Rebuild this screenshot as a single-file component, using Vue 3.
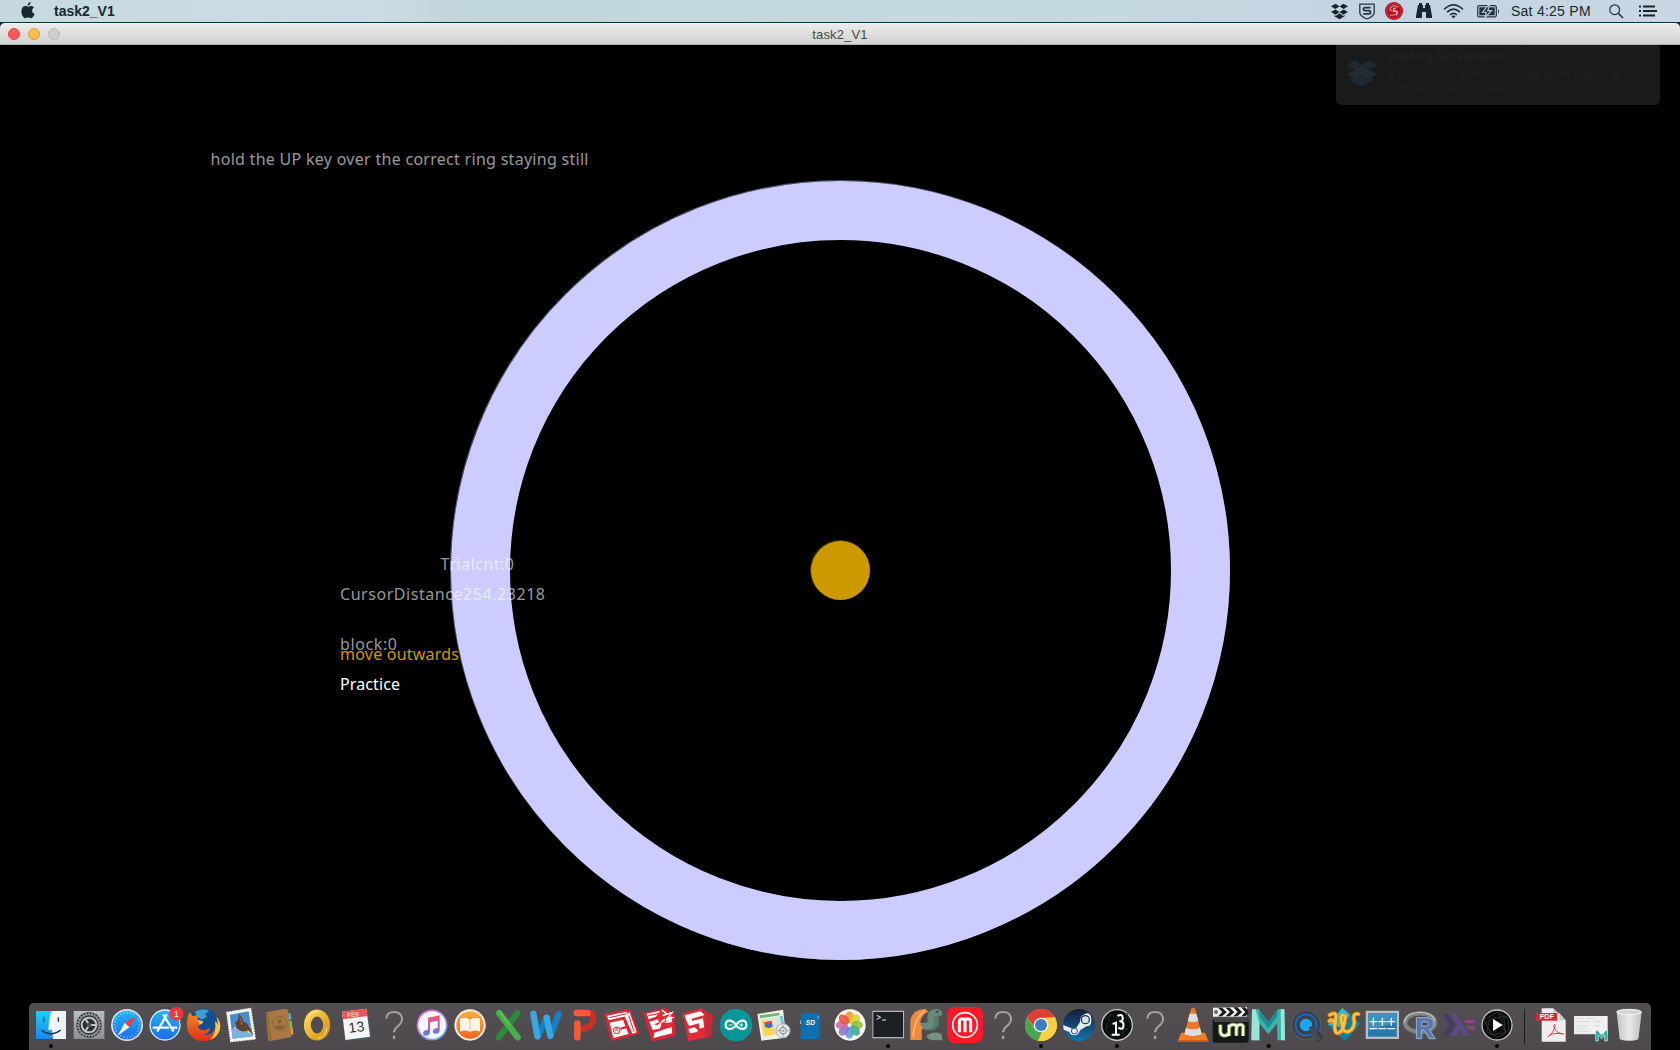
<script setup>
const messages = [
  { text: 'hold the UP key over the correct ring staying still', x: 210.5, y: 165, w: 378, kind: 'dim' },
  { text: 'Trialcnt:0', x: 440.5, y: 570, w: 73.5, kind: 'dim' },
  { text: 'CursorDistance254.23218', x: 340, y: 600, w: 205, kind: 'dim' },
  { text: 'block:0', x: 340, y: 650, w: 57, kind: 'dim' },
  { text: 'move outwards', x: 340, y: 660, w: 119, kind: 'gold' },
  { text: 'Practice', x: 340, y: 690, w: 60, kind: 'bright' },
]
const petals = ['#f59a1f', '#d9d02a', '#8fc13c', '#3cae86', '#5a9edc', '#8b76c4', '#cb6ba5', '#ec5340']
const teeth = Array.from({ length: 24 }, (_, i) => i * 15)
const box = '-57 -66 114 141'
</script>

<template>
  <div class="screen">
    <header class="menubar">
      <svg class="apple" viewBox="0 0 14 17"><path d="M9.7 0C9.8 1.9 8.4 3.6 6.6 3.8 6.4 2 8 .2 9.7 0ZM7 4.7C7.8 4.7 8.7 3.9 10.1 3.9 11.4 3.9 12.5 4.6 13.1 5.6 10.2 7.3 10.7 11 13.6 12.1 12.8 14.2 11.5 16.2 10.1 16.2 9 16.2 8.5 15.5 7.2 15.5 5.9 15.5 5.4 16.2 4.3 16.2 2.3 16.2.4 12.6.4 9.3.4 5.9 2.3 4 4.4 4 5.6 4 6.4 4.7 7 4.7Z" fill="#17282e"/></svg>
      <b class="app">task2_V1</b>
      <div class="status">
        <svg class="s-drop" viewBox="0 0 17 17"><path d="M4.7.7 8.5 3.4 4.4 6 0 3.3ZM12.3.7 17 3.3 12.7 6 8.5 3.4ZM4.4 6.4 8.5 9 4.7 11.8 0 9ZM12.7 6.4 17 9 12.3 11.8 8.5 9ZM8.5 10.3 12.2 12.9 13.6 12.1V13.3L8.5 16.3 3.4 13.3V12.1L4.8 12.9Z" fill="#17262c"/></svg>
        <svg class="s-shield" viewBox="0 0 16 17"><path d="M.8 1.2H15.2V9.5C15.2 13 11 14.8 8 16 5 14.8.8 13 .8 9.5Z" fill="none" stroke="#26363e" stroke-width="1.3"/><path d="M11.7 4.6H6Q4.4 4.6 4.4 6T6 7.6H9.8Q11.5 7.6 11.5 9.2T9.8 10.800H4.2" fill="none" stroke="#26363e" stroke-width="1.8"/></svg>
        <svg class="s-red" viewBox="0 0 18 18"><circle cx="9" cy="9" r="9" fill="#b30d20"/><circle cx="9" cy="9" r="7.3" fill="none" stroke="#d4505d" stroke-width=".7"/><path d="M13 5.300Q9 2.300 6 5.300T8 9 12 11.500 5 13M11 6.500Q8.500 5.500 8.500 7T11.500 9 11 13.500" fill="none" stroke="#e9a3a9" stroke-width="1.100"/></svg>
        <svg class="s-bino" viewBox="0 0 16 16"><path d="M3 0H6V2H7V5H9V2H10V0H13V2H14L16 13V15H10V9H6V15H0V13L2 2H3Z" fill="#17262c"/></svg>
        <svg class="s-wifi" viewBox="0 0 20 15"><g fill="none" stroke="#22323a" stroke-width="1.700"><path d="M.6 5.300Q10-3.500 19.400 5.300M3.600 8.200Q10 2 16.400 8.200M6.600 11Q10 7.700 13.400 11"/></g><path d="M7.900 12.300Q10 10.700 12.100 12.300L10 14.600Z" fill="#22323a"/></svg>
        <svg class="s-batt" viewBox="0 0 23 13"><rect x=".7" y=".7" width="18.600" height="11.200" rx="1.500" fill="none" stroke="#22323a" stroke-width="1.200"/><rect x="2.300" y="2.300" width="15.400" height="8" fill="#22323a"/><path d="M11.500 0 5.500 7.200H9.200L8 12.500 14.600 5.600H10.800L12.500 0Z" fill="#22323a" stroke="#c3d3df" stroke-width="1.100"/><path d="M21 4Q23 6.300 21 8.600Z" fill="#22323a"/></svg>
        <span class="clock">Sat 4:25 PM</span>
        <svg class="s-find" viewBox="0 0 15 15"><circle cx="5.700" cy="5.700" r="4.900" fill="none" stroke="#22323a" stroke-width="1.200"/><path d="M9.300 9.300 14 14" stroke="#22323a" stroke-width="1.600"/></svg>
        <svg class="s-list" viewBox="0 0 18 12"><path d="M0 1.500H2M0 6H2M0 10.500H2M4 1.500H16M4 6H18M4 10.500H16" stroke="#17262c" stroke-width="1.900"/></svg>
      </div>
    </header>

    <div class="titlebar-back">
      <div class="titlebar">
        <div class="lights"><i class="close"/><i class="mini"/><i class="zoom"/></div>
        <span class="title">task2_V1</span>
      </div>
    </div>

    <main class="stage">
      <svg class="canvas" viewBox="0 45 1680 958">
        <circle cx="840" cy="570" r="389.500" fill="none" stroke="#ccccff" stroke-opacity=".4"/>
        <circle cx="840.500" cy="570.500" r="360" fill="none" stroke="#ccccff" stroke-width="59"/>
        <circle cx="840" cy="570" r="29.500" fill="none" stroke="#cc9900" stroke-opacity=".4"/>
        <circle cx="840.500" cy="570.500" r="29.500" fill="#cc9900"/>
        <text v-for="m in messages" :key="m.text" :x="m.x" :y="m.y" :textLength="m.w" :class="m.kind">{{ m.text }}</text>
      </svg>
      <aside class="toast">
        <svg class="toast-icon" viewBox="0 0 30 27"><path d="M8 0 15 5 8 10 0 5Z" fill="#1e2a33"/><path d="M22 0 30 5 22 10 15 5Z" fill="#1e2a33"/><path d="M0 14 8 10 15 15 8 19ZM30 14 22 10 15 15 22 19Z" fill="#202c36"/><path d="M8 10 15 5 22 10 15 15Z" fill="#262c31"/><path d="M5 18 8 19 15 15 22 19 25 18V21L15 27 5 21Z" fill="#1d2830"/></svg>
        <div class="toast-body"><b>Sharing Screenshot</b><span>A link to your screenshot has been copied to your<br>clipboard (click to view).</span></div>
      </aside>
    </main>

    <footer class="dock">
      <svg class="icon" :viewBox="box">
        <defs>
          <linearGradient id="cyan" x2="0" y2="1"><stop stop-color="#18d1fb"/><stop offset="1" stop-color="#1b87ee"/></linearGradient>
          <linearGradient id="blue" x2="0" y2="1"><stop stop-color="#1fb6f8"/><stop offset="1" stop-color="#1c6bea"/></linearGradient>
          <linearGradient id="steel" x2="0" y2="1"><stop stop-color="#b5bfc5"/><stop offset="1" stop-color="#899094"/></linearGradient>
          <linearGradient id="gold" x2="1" y2="1"><stop stop-color="#fbd65c"/><stop offset="1" stop-color="#d99413"/></linearGradient>
          <linearGradient id="fox" x2="0" y2="1"><stop stop-color="#f08a22"/><stop offset="1" stop-color="#d8321b"/></linearGradient>
          <linearGradient id="orange" x2="0" y2="1"><stop stop-color="#fcab3c"/><stop offset="1" stop-color="#f0661f"/></linearGradient>
          <linearGradient id="note" x2="0" y2="1"><stop stop-color="#f8536b"/><stop offset=".6" stop-color="#b35bd0"/><stop offset="1" stop-color="#3a90f3"/></linearGradient>
          <linearGradient id="rim" x2="1" y2="1"><stop stop-color="#f56ab0"/><stop offset=".45" stop-color="#b172ed"/><stop offset="1" stop-color="#42c8f5"/></linearGradient>
          <linearGradient id="steam" x2="0" y2="1"><stop stop-color="#141b36"/><stop offset="1" stop-color="#1474ae"/></linearGradient>
          <linearGradient id="trash" x2="1" y2="0"><stop stop-color="#c9c9cb"/><stop offset=".5" stop-color="#f1f1f2"/><stop offset="1" stop-color="#c2c2c5"/></linearGradient>
          <radialGradient id="qt"><stop stop-color="#35d1ff"/><stop offset="1" stop-color="#0b68dc"/></radialGradient>
        </defs>
        <path d="M-45-42H45V42H-45Z" fill="url(#cyan)"/><path d="M1-42H45V42H6Q3 26 3 14H-8Q-7-18 1-42Z" fill="#edf3f8"/><path d="M-22-21V-11M22-21V-11M-28 16Q0 38 28 16" fill="none" stroke="#20313e" stroke-width="4" stroke-linecap="round"/><circle cy="63" r="6" fill="#050505"/>
      </svg>
      <svg class="icon" :viewBox="box"><path d="M-46-42H46V42H-46Z" fill="url(#steel)"/><circle r="38" fill="#2e3032"/><circle r="31" fill="none" stroke="#85898c" stroke-width="4"/><path v-for="t in teeth" :key="t" d="M0-37V-31" :transform="`rotate(${t})`" stroke="#a5a8aa" stroke-width="4"/><circle r="22" fill="none" stroke="#c1c4c6" stroke-width="6"/><path d="M0 0H25M0 0-12-21M0 0-12 21" stroke="#c1c4c6" stroke-width="6"/><circle r="7" fill="#505356"/></svg>
      <svg class="icon" :viewBox="box"><circle r="48" fill="#dfe4e7"/><circle r="43" fill="url(#blue)"/><path v-for="t in teeth" :key="t" d="M0-40V-34" :transform="`rotate(${t})`" stroke="#c1e3fa" stroke-width="2"/><path d="M28-27 7 7-7-7Z" fill="#f33b37"/><path d="M-28 32-7-7 7 7Z" fill="#f2f2f2"/></svg>
      <svg class="icon" :viewBox="box"><circle r="47" fill="#dcebf5"/><circle r="43" fill="url(#blue)"/><g stroke="#f2f8fe" stroke-width="7" stroke-linecap="round" fill="none"><path d="M4-29-22 17M-4-29 24 17M-34 8H9M24 8H34"/></g><circle cx="34" cy="-34" r="21" fill="#f0373c"/><text x="34" y="-25" class="badge">1</text></svg>
      <svg class="icon" :viewBox="box"><circle cx="2" cy="-3" r="47" fill="#12508f"/><path d="M-25-40Q-2-54 20-42L6-33 12-24-4-16-16-24Z" fill="#3f9ccb"/><path d="M-40-39-32-27-12-31Q-18-22-15-15L0-11-1-5-15 3Q-14 13 0 16 15 15 22 7 20 24 3 30 26 32 35 14 40 2 36-11 43-6 44 0 46-12 40-25 56-8 50 15 42 44 8 49-30 51-45 20-54-10-40-39Z" fill="url(#fox)"/><path d="M40-25Q56-8 50 15 43 36 22 44 42 22 36-11 43-6 44 0 46-12 40-25Z" fill="#fac640"/><path d="M-15-15 0-11-1-5-10-1Z" fill="#f5b873"/></svg>
      <svg class="icon" :viewBox="box"><path d="M-43-38 29-50 43 42-31 50Z" fill="#f6f6f4" stroke="#efefee" stroke-width="4" stroke-dasharray="5 3"/><path d="M-34-31 23-41 35 34-25 41Z" fill="#4b8dcc"/><path d="M-29 12 31 2 35 34-25 41Z" fill="#7ab1dd"/><path d="M-20-8Q-9-8-9-22L-7-33Q4-26 7-10L17-6 29 12 36 29 20 18 10 19Q-2 21-9 12L-24 9-12 3Z" fill="#5e432a"/><path d="M-24 9-16 5-13 13ZM18 13 33 27 23 24Z" fill="#e5e0ca"/><path d="M-5-25Q2-14 2 0" fill="none" stroke="#9a7950" stroke-width="3"/></svg>
      <svg class="icon" :viewBox="box"><path d="M26-34 35-36 37-17 29-14Z" fill="#41b3e1"/><path d="M29-11 38-13 40 7 32 9Z" fill="#75c44d"/><path d="M33 9 41 7 43 28 35 31Z" fill="#ee933d"/><path d="M-40-38 20-49Q26-49 27-43L37 36-28 49Q-32 49-33 43Z" fill="#a87943"/><path d="M-40-38-33-39-22 47-28 49Z" fill="#936a38"/><circle cx="2" cy="-5" r="21" fill="none" stroke="#8c6234" stroke-width="3"/><circle cx="2" cy="-11" r="7" fill="#8c6234"/><path d="M-13 7Q-9-1 2-1T17 7Q2 20-13 7Z" fill="#8c6234"/></svg>
      <svg class="icon" :viewBox="box"><ellipse cx="0" cy="0" rx="29" ry="36" fill="none" stroke="url(#gold)" stroke-width="21"/><path d="M-30-14Q-21-43 5-40M30 8Q27 36 3 40" fill="none" stroke="#ffe58c" stroke-width="3"/></svg>
      <svg class="icon" :viewBox="box"><path d="M-37-34 37-44 48 40-28 51Z" fill="#4a565a"/><path d="M-42-40 31-49 42 35-32 45Z" fill="#f5f5f5"/><path d="M-42-40 31-49 34-27-39-17Z" fill="#ed5351"/><text class="month" x="-5" y="-26" transform="rotate(-7)">FEB</text><text class="day" x="0" y="21" transform="rotate(-7)">13</text></svg>
      <svg class="icon" :viewBox="box"><path d="M-23-19Q-22-39 0-39T24-19Q24-7 12 3 0 12 0 22" fill="none" stroke="#a4a1a4" stroke-width="6"/><path d="M0 32V42" stroke="#a4a1a4" stroke-width="7"/></svg>
      <svg class="icon" :viewBox="box"><circle r="44" fill="#f9f7fb" stroke="url(#rim)" stroke-width="5"/><path d="M-12-22 23-29V14Q23 26 12 26T3 19Q3 10 17 9V-13L-6-8V21Q-7 31-17 32T-27 24Q-26 15-12 14Z" fill="url(#note)"/></svg>
      <svg class="icon" :viewBox="box"><circle r="47" fill="#f5eee8"/><circle r="41" fill="url(#orange)"/><path d="M0-16Q-15-27-30-18V20Q-14 13 0 21 14 13 30 20V-18Q15-27 0-16Z" fill="#fff5e8"/><path d="M0-16V21" stroke="#d7a579" stroke-width="2"/></svg>
      <svg class="icon" :viewBox="box"><g stroke-width="19" stroke-linecap="round"><path d="M28-35-28 37" stroke="#2d8a39"/><path d="M-27-36 29 37" stroke="#48ae4d"/><path d="M-24-39 5 0" stroke="#61c55d" stroke-width="5"/></g></svg>
      <svg class="icon" :viewBox="box"><g fill="none" stroke-width="19" stroke-linecap="round" stroke-linejoin="round"><path d="M2-22-24 34M38-33 13 33" stroke="#1a7dbd"/><path d="M-38-34-26 34M2-22 13 33" stroke="#38a8e3"/></g></svg>
      <svg class="icon" :viewBox="box"><path d="M-20-36H13Q28-36 28-19T12 5L-1 12" fill="none" stroke="#cd3022" stroke-width="19" stroke-linecap="round"/><path d="M-20-4V37M-22-36H10" stroke="#f6583a" stroke-width="20" stroke-linecap="round"/></svg>
      <svg class="icon" :viewBox="box"><path d="M-54-33 23-49 53 26-32 48Z" fill="#df2432" stroke="#8e4447" stroke-width="2"/><path d="M-45-28 14-40 19-28-40-14ZM22-39 44 22 31 26 9-24ZM-37-7 4-16 22 26-26 39Z" fill="#fff"/><path d="M-38-22 14-34M20-29 36 20" stroke="#d52332" stroke-width="3"/><path d="M3-16 9-17 25 24 19 26 13 10-4 14-6 8 10 4Z" fill="#df2432"/><circle cx="-16" cy="16" r="10" fill="#fff" stroke="#d12632" stroke-width="3"/><path d="M-21 20-16 8-11 20M-19 15H-13" fill="none" stroke="#d12632" stroke-width="2"/></svg>
      <svg class="icon" :viewBox="box"><path d="M-50-37 15-51 44-34 46 32-24 50Z" fill="#dd2635"/><path d="M-40-34 1-43-12-25-34-17ZM-32-10-5-17-3-8-18-2-8 1 11-18 35-26 36-8 7-5-1 11-22 15ZM-17 23 35 5 36 25-20 39Z" fill="#fff"/><path d="M-35-28 7-37 9-29-4-24-3-15 16-21 17-10 5-5 6 5 27-2 29 10" fill="none" stroke="#e33340" stroke-width="4"/><path d="M5-45 20-34 8-28 36-37 20-18 42-23" fill="none" stroke="#fff" stroke-width="4"/></svg>
      <svg class="icon" :viewBox="box"><path d="M-47-35 10-50 45-28 37 35-30 48Z" fill="#e02c3a"/><path d="M10-50 45-28 37 35 20 38 23-19Z" fill="#c92836"/><path d="M-40-29 7-41 20-30-19-19-18-12 15-20 18 7 5 11 2-5-26 3-32-6Z" fill="#fff"/><path d="M-29 12-11 7-1 14-2 21-24 25Z" fill="#fff"/></svg>
      <svg class="icon" :viewBox="box"><circle r="49" fill="#07979b"/><path d="M0 0C-9-15-30-19-31-1S-9 15 0 0 30-19 31-1 9 15 0 0Z" fill="none" stroke="#eef7f5" stroke-width="7"/><path d="M-22 0H-10M10 0H22M16-6V6" stroke="#eef7f5" stroke-width="3"/></svg>
      <svg class="icon" :viewBox="box"><path d="M-50-33 27-46 37 38-38 47Z" fill="#f4f0e3"/><path d="M-43-29 16-37 17-29-42-20Z" fill="#6ab67d"/><path d="M-40-17 17-26 28 22-31 37Z" fill="#dce6d2"/><path d="M-38-12-25-14 12 26-31 34Z" fill="#fad656"/><path d="M-29-8-7-12-4 5-16 10-27 6Z" fill="#486ebc"/><path d="M-29-8-7-12-6-7-28-3Z" fill="#df4a45"/><path d="M17-26 26-27 31 2 24 5Z" fill="#6ac5e9"/><circle cx="27" cy="17" r="21" fill="#e6ebed" stroke="#a5b0b5" stroke-width="3"/><circle cx="27" cy="17" r="10" fill="none" stroke="#4a5559" stroke-width="2"/><path d="M27 0V8M27 26V34M10 17H18M36 17H44M23 13 31 21M31 13 23 21" stroke="#607078" stroke-width="2"/></svg>
      <svg class="icon" :viewBox="box"><path d="M-32-35H16L23-28V42H-34V-8H-31V-14H-35Z" fill="#0d70b1"/><path d="M-34-14V-3M18-28V-20" stroke="#e5f1f7" stroke-width="2"/><text x="-5" y="1" class="sd">SD</text></svg>
      <svg class="icon" :viewBox="box"><circle r="47" fill="#f7f5f2"/><ellipse v-for="(p, i) in petals" :key="p" cx="0" cy="-23" rx="13" ry="18" :fill="p" opacity=".88" :transform="`translate(-2) rotate(${i * 45})`"/></svg>
      <svg class="icon" :viewBox="box"><path d="M-47-43H48V40H-47Z" fill="#adb5bb"/><path d="M-44-39H45V36H-44Z" fill="#1d2022"/><path d="M-34-29-22-23-34-17M-18-15H-6" fill="none" stroke="#eee" stroke-width="3"/><circle cy="63" r="6" fill="#050505"/></svg>
      <svg class="icon" :viewBox="box"><path d="M-47 45V-10Q-45-46-2-49L7-40Q-13-32-18-8L-4-4V8L-13 14V45Z" fill="#f18b3c"/><path d="M-39 35Q-34-24-4-43" fill="none" stroke="#ffbc76" stroke-width="5"/><path d="M-3 5Q33 10 28-14 22-36 39-33" fill="none" stroke="#56776a" stroke-width="22"/><path d="M-18-6Q4-2 5-14-2-48 32-48 52-47 48-29L31-24Q20-29 25-10 27 17-9 12Z" fill="#698a7b"/><path d="M2 32Q22 16 46 27L49 46H29Q2 45 2 32Z" fill="#779285"/><circle cx="34" cy="-40" r="3" fill="#192b26"/></svg>
      <svg class="icon" :viewBox="box"><rect x="-54" y="-54" width="108" height="108" rx="23" fill="#ff1825"/><circle r="37" fill="none" stroke="#fff" stroke-width="5"/><path d="M-17 22V-10Q-17-18-10-18H10Q17-18 17-10V22M0-18V22" fill="none" stroke="#fff" stroke-width="9"/></svg>
      <svg class="icon" :viewBox="box"><path d="M-23-19Q-22-39 0-39T24-19Q24-7 12 3 0 12 0 22" fill="none" stroke="#a4a1a4" stroke-width="6"/><path d="M0 32V42" stroke="#a4a1a4" stroke-width="7"/></svg>
      <svg class="icon" :viewBox="box"><circle r="48" fill="#f9cf45"/><path d="M-42-24A48 48 0 0 1 42-24L0-21-19 9Z" fill="#df3f35"/><path d="M-42-24-19 11 2 22-9 47A48 48 0 0 1-42-24Z" fill="#45a654"/><path d="M48 0A48 48 0 0 1-9 47L19 10 0-21H43Z" fill="#f9cf45"/><circle r="22" fill="#edf2f4"/><circle r="18" fill="#397fc1"/><circle cy="63" r="6" fill="#050505"/></svg>
      <svg class="icon" :viewBox="box"><circle r="48" fill="url(#steam)"/><path d="M-48 0-19 11-8 8 3-9Q2-29 19-34T37-17 22 4L3 16Q-1 31-14 31-27 31-29 21L-46 14Z" fill="#e8edf0"/><circle cx="19" cy="-16" r="14" fill="#253b5c"/><circle cx="19" cy="-16" r="10" fill="#dbe3e8"/><circle cx="-14" cy="18" r="9" fill="none" stroke="#29537c" stroke-width="3"/></svg>
      <svg class="icon" :viewBox="box"><circle r="46" fill="#070c0d" stroke="#c9c9c9" stroke-width="4"/><path d="M-39-16-18-33 3-17 30-36 40 1 17 25-16 37-35 9-14-5 34 15M-18-33-35 9M30-36 17 25" fill="none" stroke="#2e3930" stroke-width="2"/><path d="M-13-3-3-7V28M-16 29H8M-3-6V28" fill="none" stroke="#fff" stroke-width="6"/><path d="M1-27Q15-35 17-23T7-11Q21-11 19 3T4 8" fill="none" stroke="#fff" stroke-width="6"/><circle cy="63" r="6" fill="#050505"/></svg>
      <svg class="icon" :viewBox="box"><path d="M-23-19Q-22-39 0-39T24-19Q24-7 12 3 0 12 0 22" fill="none" stroke="#a4a1a4" stroke-width="6"/><path d="M0 32V42" stroke="#a4a1a4" stroke-width="7"/></svg>
      <svg class="icon" :viewBox="box"><path d="M-36 23H36L47 50H-46Z" fill="#f17b26"/><path d="M-5-50Q0-54 6-50L27 31Q0 45-27 31Z" fill="#ee7625"/><path d="M-10-34H10L16-12Q0-5-16-12ZM-21 8Q0 17 21 8L26 28Q0 39-26 28Z" fill="#dedede"/><path d="M-46 48H47" stroke="#cb5314" stroke-width="5"/></svg>
      <svg class="icon" :viewBox="box"><rect x="-55" y="-18" width="108" height="71" rx="9" fill="#151719"/><path d="M-51-22H52V-9H-51Z" fill="#444"/><path d="M-54-52 48-54V-25H-54Z" fill="#eee"/><path d="M-39-52H-27L-13-38-27-26H-39L-26-39ZM-16-52H-4L10-38-4-26H-16L-3-39ZM7-53H19L33-39 19-26H7L20-39ZM30-53H42L52-42V-33L43-26H31L43-39Z" fill="#181a1b"/><circle cx="-45" cy="-39" r="6" fill="#666"/><g fill="none" stroke-linejoin="round"><path d="M-32-1V20Q-31 32-19 32T-6 20V-1M-6 33V10Q-5-1 7-1T16 9V32M16 10Q17-1 28-1T36 10V33" stroke="#5f8a34" stroke-width="13"/><path d="M-32-1V20Q-31 32-19 32T-6 20V-1M-6 33V10Q-5-1 7-1T16 9V32M16 10Q17-1 28-1T36 10V33" stroke="#fbffe9" stroke-width="7"/></g></svg>
      <svg class="icon" :viewBox="box"><g transform="translate(-2)"><path d="M-49-47H-28L0-9 29-47H48L50 46H27L26-5 0 28-27-5V46H-51Z" fill="#39b5ad"/><path d="M-49-47H-38L-27-5V46H-51ZM37-47H48L50 46H38Z" fill="#9be4d9"/><path d="M-28-47 0-9 29-47 26-25 0 10-26-25Z" fill="#1f8d93"/></g><circle cx="-1" cy="63" r="6" fill="#050505"/></svg>
      <svg class="icon" :viewBox="box"><g transform="translate(-3)"><circle r="46" fill="#555d65"/><path d="M10 12 31 8 47 31V47H31Z" fill="#343b42"/><circle r="38" fill="none" stroke="#3b434b" stroke-width="9"/><circle r="33" fill="url(#qt)"/><circle r="24" fill="none" stroke="#3a4249" stroke-width="11"/><circle r="18" fill="#19a7f5"/><path d="M7 6 18 3 46 45H27Z" fill="#434b52"/></g></svg>
      <svg class="icon" :viewBox="box"><g transform="translate(-3)"><path d="M-5-51 49-4 3 49-49-1Z" fill="#087fa6"/><path d="M-5-51 18-31-8 7-49-1Z" fill="#36bad3"/><path id="coil" d="M-43-30Q-24-41-24-25L-28 8Q-27 30-13 22T4-27Q-12-35-9-18L-4 12Q7 28 21 15T29-20Q28-36 43-33M-44-12Q-33-20-31-8" fill="none" stroke="#d48517" stroke-width="13" stroke-linecap="round"/><path d="M-43-30Q-24-41-24-25L-28 8Q-27 30-13 22T4-27Q-12-35-9-18L-4 12Q7 28 21 15T29-20Q28-36 43-33M-44-12Q-33-20-31-8" fill="none" stroke="#ffc044" stroke-width="8" stroke-linecap="round"/></g></svg>
      <svg class="icon" :viewBox="box"><path d="M-52-43H48V42H-52Z" fill="#b7bfc4"/><path d="M-45-36H41V35H-45Z" fill="#2679ab"/><path d="M-45-36H41V-9L-45 18Z" fill="#4090bd"/><path d="M-40-10H-17M-29-22V2M-14-10H10M-2-22V2M13-10H36M25-22V2M-40 11H-17M-14 11H10M13 11H36" stroke="#eff5f7" stroke-width="4"/></svg>
      <svg class="icon" :viewBox="box"><ellipse cx="-3" cy="-7" rx="45" ry="28" fill="none" stroke="#7e8681" stroke-width="13"/><path d="M-51-6Q-45-38-5-38T42-12" fill="none" stroke="#bbc0bc" stroke-width="4"/><path fill-rule="evenodd" d="M-14-22H17Q38-22 38-4 38 8 25 13L43 41H24L9 15H2V41H-14ZM2-9V3H15Q22 3 22-3T15-9Z" fill="#597aaa" stroke="#9bb2d3" stroke-width="3"/></svg>
      <svg class="icon" :viewBox="box"><path d="M-50-33H-34L-12 0-34 34H-50L-28 0Z" fill="#453b65"/><path d="M-27-33H-11L33 34H17L3 13-11 34H-27L-5 0Z" fill="#5e4a88"/><path d="M13-15H48V-5H20ZM23 3H48V13H29Z" fill="#884783"/></svg>
      <svg class="icon" :viewBox="box"><circle r="45" fill="#090a0a" stroke="#c5c5c5" stroke-width="4"/><path d="M-39-17 5-39 33-20 36 15 4 38-31 20-22-17 20-26 25 23-17 29M-39-17-17 29M5-39 25 23M-42 2-22-17M33-20 20-26" fill="none" stroke="#3f4141" stroke-width="2"/><path d="M-12-18 17 0-12 18Z" fill="#fff"/><circle cy="63" r="6" fill="#050505"/></svg>
      <i class="divider"/>
      <svg class="icon" :viewBox="box"><g transform="translate(-1)"><path d="M-30-50H4L20-35H23L42-14V50H-30Z" fill="#eee"/><path d="M4-50V-35H20ZM23-35V-14H42Z" fill="#c8c8c8"/><path d="M-47-36H17V-13H-47Z" fill="#e3262c"/><text x="-15" y="-17" class="pdf">PDF</text><path d="M-9 32C2 29 13 3 9-1S4 21 29 26 1 16-12 37" fill="none" stroke="#d7343c" stroke-width="3"/></g></svg>
      <svg class="icon" :viewBox="box"><path d="M-51-27H50V28H-51Z" fill="#f0f0f0"/><path d="M-46-19H-20M-14-19H10M-46-10H-5M-46 3H-8M-46 12H-17M-46 20H-5M6-10H34M6 2H27" stroke="#d8dada" stroke-width="3"/><path d="M14 48V17H22L32 33 43 17H49V48H41V29L32 42 22 29V48Z" fill="#24aaa4" stroke="#d5f5ee" stroke-width="2"/></svg>
      <svg class="icon" :viewBox="box"><path d="M-37-39-28 43Q0 52 28 43L38-39Z" fill="url(#trash)" opacity=".96"/><ellipse cx="0" cy="-39" rx="37" ry="8" fill="#d4d4d7" stroke="#f5f5f5" stroke-width="3"/></svg>
    </footer>
  </div>
</template>

<style>
body { margin: 0; background: #000; }
</style>
<style scoped>
.screen { width: 1680px; height: 1050px; background: #000; display: flex; flex-direction: column; align-items: center; overflow: hidden; font-family: "Liberation Sans", Arial, sans-serif; }
svg { display: block; flex: none; }
.menubar { width: 100%; height: 22px; flex: none; display: flex; align-items: center; color: #17282e; background: linear-gradient(90deg, #c5dadf, #cbdde4 22%, #c1d6da 27%, #c5dae0 60%, #c2d4e1 83%, #c8d7e3); }
.apple { width: 14px; height: 17px; margin-left: 20.5px; margin-top: -2px; }
.app { margin-left: 19.5px; font-size: 14px; line-height: 22px; letter-spacing: 0; }
.status { margin-left: auto; margin-right: 23px; display: flex; align-items: center; height: 22px; }
.s-drop { width: 17px; height: 17px; margin-right: 10.5px; }
.s-shield { width: 16px; height: 17px; margin-right: 10.5px; }
.s-red { width: 18px; height: 18px; margin-right: 13px; }
.s-bino { width: 16px; height: 16px; margin-right: 11px; }
.s-wifi { width: 21px; height: 15px; margin-right: 13px; }
.s-batt { width: 23px; height: 13px; margin-right: 11px; }
.clock { width: 81px; font-size: 14px; line-height: 22px; margin-right: 17px; white-space: nowrap; letter-spacing: .25px; }
.s-find { width: 15px; height: 15px; margin-right: 15px; }
.s-list { width: 18px; height: 12px; }
.titlebar-back { width: 100%; height: 23px; flex: none; background: #06303d; padding-top: 1px; box-sizing: border-box; }
.titlebar { height: 22px; box-sizing: border-box; border-radius: 5px 5px 0 0; border-top: 1px solid #f5f5f5; border-bottom: 1px solid #b1b1b1; background: linear-gradient(#ebebeb, #d2d2d2); display: grid; grid-template-columns: 1fr auto 1fr; align-items: center; }
.lights { display: flex; gap: 8px; padding-left: 8px; }
.lights i { width: 12px; height: 12px; box-sizing: border-box; border-radius: 50%; border: 1px solid; }
.lights .close { background: #fc5b57; border-color: #e2463f; }
.lights .mini { background: #fdbc4c; border-color: #dfa03a; }
.lights .zoom { background: #cfcfcf; border-color: #b9b9b9; }
.title { font-size: 13px; line-height: 18px; padding-top: 2px; letter-spacing: .15px; color: #484848; }
.stage { position: relative; width: 100%; height: 958px; flex: none; }
.canvas { width: 1680px; height: 958px; }
.canvas text { font: 16px "Noto Sans", "Open Sans", sans-serif; }
.dim { fill: #fff; fill-opacity: .6; }
.gold { fill: #cc9900; }
.bright { fill: #fff; }
.toast { position: absolute; top: 0; right: 20px; width: 324px; height: 60px; box-sizing: border-box; background: #1a1a1a; border-radius: 0 0 5px 5px; display: flex; padding: 5px 0 0 11px; color: #212121; }
.toast-icon { width: 30px; height: 27px; margin-top: 10px; }
.toast-body { margin-left: 10px; display: flex; flex-direction: column; white-space: nowrap; }
.toast-body b { font-size: 12px; line-height: 15px; font-weight: 600; letter-spacing: .2px; }
.toast-body span { font-size: 11.5px; line-height: 14px; margin-top: 2px; letter-spacing: .2px; }
.dock { width: 1622px; height: 47px; flex: none; box-sizing: border-box; padding-left: 3px; display: flex; background: linear-gradient(#524e51, #4d494c); border-radius: 5px 5px 0 0; }
.icon { width: 38.07px; height: 47px; }
.divider { width: 1px; height: 35px; margin: 6px 8px 0 8px; background: #1d1b1d; flex: none; }
.icon text { font-family: "Liberation Sans", Arial, sans-serif; text-anchor: middle; }
.icon .badge { font-size: 25px; fill: #fff; }
.icon .month { font-size: 18px; fill: #fff; }
.icon .day { font-size: 43px; fill: #303030; }
.icon .sd { font-size: 20px; font-weight: bold; font-style: italic; fill: #fff; }
.icon .pdf { font-size: 21px; font-weight: bold; fill: #fff; }
</style>
